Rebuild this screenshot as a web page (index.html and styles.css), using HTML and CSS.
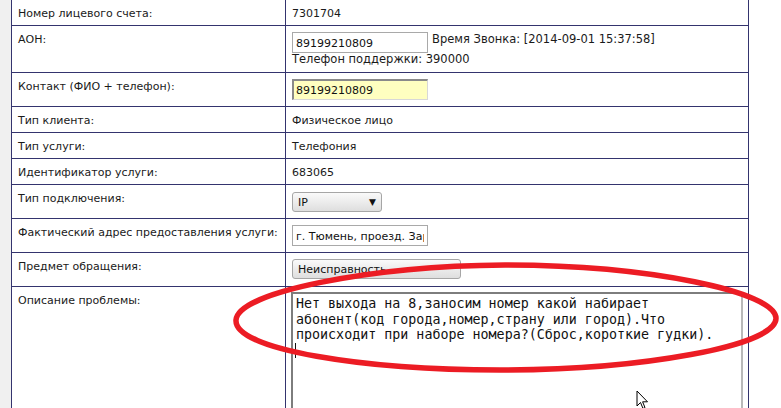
FILE: index.html
```html
<!DOCTYPE html>
<html lang="ru">
<head>
<meta charset="utf-8">
<title>Обращение</title>
<link rel="stylesheet" href="styles.css">
</head>
<body>
<div class="page">
  <div class="gutter"></div>
  <div class="form">
    <div class="label">Номер лицевого счета:</div>
    <div class="value text">7301704</div>

    <div class="label">АОН:</div>
    <div class="value">
      <div class="line">
        <input class="field" type="text" value="89199210809">
        <span class="note">Время Звонка: [2014-09-01 15:37:58]</span>
      </div>
      <div class="note">Телефон поддержки: 390000</div>
    </div>

    <div class="label">Контакт (ФИО + телефон):</div>
    <div class="value"><input class="field field-hl" type="text" value="89199210809"></div>

    <div class="label">Тип клиента:</div>
    <div class="value text">Физическое лицо</div>

    <div class="label">Тип услуги:</div>
    <div class="value text">Телефония</div>

    <div class="label">Идентификатор услуги:</div>
    <div class="value text">683065</div>

    <div class="label">Тип подключения:</div>
    <div class="value"><div class="select select-ip"><span>IP</span><span class="arrow">▼</span></div></div>

    <div class="label">Фактический адрес предоставления услуги:</div>
    <div class="value"><input class="field" type="text" value="г. Тюмень, проезд. Заречный"></div>

    <div class="label">Предмет обращения:</div>
    <div class="value"><div class="select select-subject"><span>Неисправность</span></div></div>

    <div class="label">Описание проблемы:</div>
    <div class="value value-area"><textarea class="area">Нет выхода на 8,заносим номер какой набирает
абонент(код города,номер,страну или город).Что
происходит при наборе номера?(Сброс,короткие гудки).
</textarea></div>
  </div>
</div>

<span class="caret"></span>

<svg class="mark" width="781" height="408" viewBox="0 0 781 408">
  <path d="M 236 320 C 238 292, 370 266, 505 265 C 650 265, 775 292, 776 318 C 777 346, 640 370, 500 370 C 365 370, 234 350, 236 320 Z"
        fill="none" stroke="#ec1c24" stroke-width="5.5"/>
</svg>

<svg class="cursor" width="13" height="20" viewBox="0 0 13 20">
  <path d="M1 1 L1 16 L4.5 12.5 L7 18.5 L9 17.6 L6.6 11.8 L11.5 11.8 Z" fill="#fff" stroke="#000" stroke-width="1" stroke-linejoin="miter"/>
</svg>
</body>
</html>
```

FILE: styles.css
```css
html, body {
  margin: 0;
  padding: 0;
  background: #ffffff;
  overflow: hidden;
}

body {
  width: 781px;
  height: 408px;
  position: relative;
  font-family: "DejaVu Sans", Verdana, sans-serif;
  font-size: 11px;
  color: #1a1a1a;
}

.page {
  display: flex;
  align-items: flex-start;
  margin-top: -1px;
}

.gutter {
  width: 11px;
  height: 420px;
  background: #f0f0f0;
  flex: none;
}

.form {
  display: grid;
  grid-template-columns: 273px 462px;
  gap: 1px;
  padding: 1px;
  background: #34346e;
  flex: none;
}

.label,
.value {
  background: #ffffff;
  line-height: 13px;
}

.label {
  padding: 7px 6px 5px;
}

.value {
  padding: 6px 6px 6px;
}

.value.text {
  padding: 7px 6px 5px;
}

.line {
  display: flex;
  align-items: flex-start;
  gap: 4px;
}

.note {
  font-size: 11.5px;
  line-height: 13px;
  white-space: nowrap;
}

.line .note {
  padding-top: 1px;
}

.field {
  box-sizing: border-box;
  display: block;
  width: 136px;
  height: 21px;
  margin: 0;
  padding: 1px 3px 0;
  border: 1px solid #a9a9a9;
  background: #ffffff;
  font-family: "DejaVu Sans", Verdana, sans-serif;
  font-size: 11px;
  color: #111;
  outline: none;
}

.field-hl {
  background: #ffffc0;
  border-top: 2px solid #8a8a8a;
  border-left: 2px solid #8a8a8a;
  border-right: 1px solid #d8d8d8;
  border-bottom: 1px solid #d8d8d8;
  padding-left: 2px;
}

.select {
  box-sizing: border-box;
  display: flex;
  align-items: center;
  justify-content: space-between;
  height: 20px;
  padding: 0 5px;
  border: 1px solid #a6a6a6;
  border-radius: 3px;
  background: linear-gradient(#fafafa, #dedede);
  color: #111;
}

.select-ip {
  width: 90px;
  margin-top: 1px;
}

.select-subject {
  width: 169px;
  margin-bottom: 1px;
}

.arrow {
  font-size: 9px;
  color: #111;
}

.value-area {
  padding: 5px 6px 0 5px;
}

.area {
  box-sizing: border-box;
  display: block;
  width: 452px;
  height: 140px;
  margin: 0;
  padding: 2px 3px;
  border-style: solid;
  border-width: 2px;
  border-color: #7d7d7d #b9b9b9 #b9b9b9 #7d7d7d;
  resize: none;
  overflow: hidden;
  font-family: "DejaVu Sans Mono", "Liberation Mono", monospace;
  font-size: 13.33px;
  line-height: 15.5px;
  color: #111;
  background: #fff;
  outline: none;
}

.caret {
  position: absolute;
  left: 295px;
  top: 343px;
  width: 1px;
  height: 15px;
  background: #111;
}

.mark {
  position: absolute;
  left: 0;
  top: 0;
  pointer-events: none;
}

.cursor {
  position: absolute;
  left: 636px;
  top: 390px;
  pointer-events: none;
}
```
